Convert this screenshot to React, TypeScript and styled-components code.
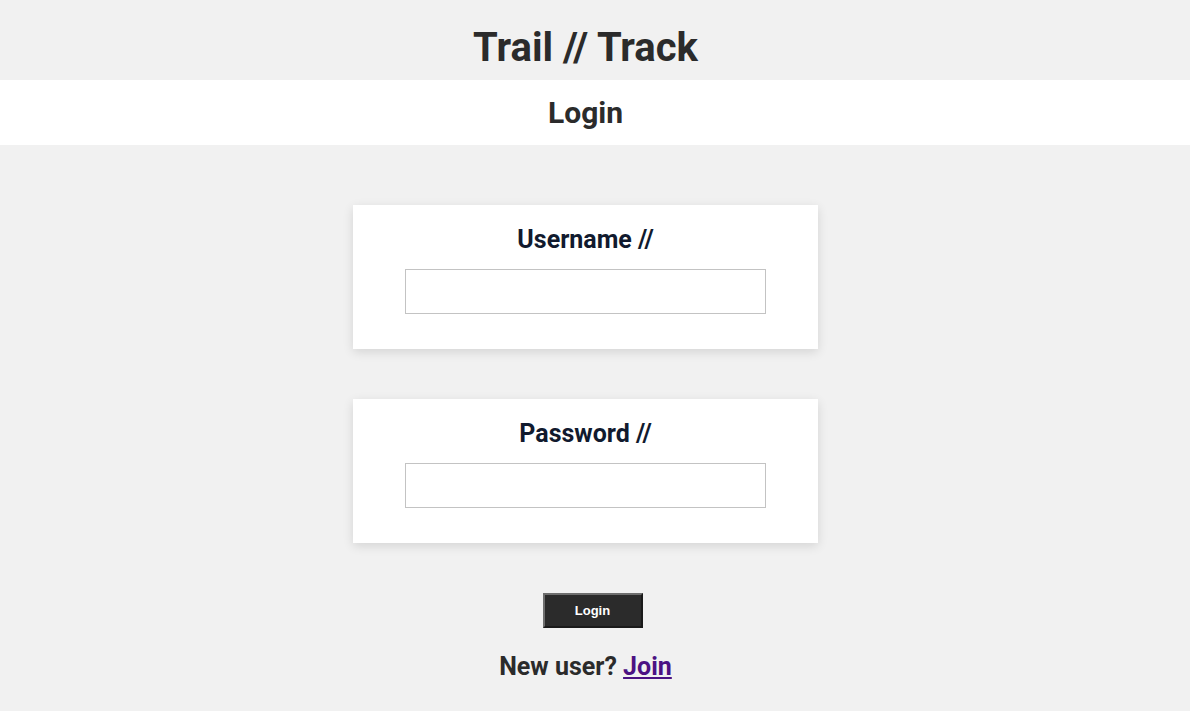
import styled, { createGlobalStyle } from "styled-components";

const GlobalStyle = createGlobalStyle`
  html, body {
    margin: 0;
    padding: 0;
    background: #f1f1f1;
    font-family: Roboto, "Liberation Sans", Arial, sans-serif;
    color: #2b2b2b;
  }
`;

// content sits centred in the area left of a 19px gutter; the white band still runs full width
const Page = styled.div`
  display: flex;
  flex-direction: column;
  align-items: center;
  min-height: 711px;
  padding-right: 19px;
`;

const Header = styled.header`
  width: 100%;
  height: 80px;
  display: flex;
  justify-content: center;
  align-items: center;
  padding-top: 16px;
  box-sizing: border-box;
`;

const SiteTitle = styled.h1`
  margin: 0;
  font-size: 40px;
  font-weight: 700;
  line-height: 48px;
`;

const Band = styled.div`
  width: calc(100% + 19px);
  margin-right: -19px;
  padding-right: 19px;
  box-sizing: border-box;
  height: 65px;
  background: #ffffff;
  display: flex;
  justify-content: center;
  align-items: center;
`;

const PageTitle = styled.h2`
  margin: 0;
  font-size: 30px;
  font-weight: 700;
  line-height: 36px;
`;

const Form = styled.form`
  display: flex;
  flex-direction: column;
  align-items: center;
  gap: 50px;
  padding-top: 60px;
`;

const FieldCard = styled.div`
  width: 465px;
  box-sizing: border-box;
  background: #ffffff;
  box-shadow: 0 3px 10px rgba(0, 0, 0, 0.12);
  display: flex;
  flex-direction: column;
  align-items: center;
  gap: 14px;
  padding: 20px 0 35px;
`;

const Label = styled.label`
  font-size: 25px;
  font-weight: 700;
  line-height: 30px;
  color: #111a2e;
`;

const TextInput = styled.input`
  width: 361px;
  height: 45px;
  box-sizing: border-box;
  border: 1px solid #c3c3c3;
  background: #ffffff;
  outline: none;
  padding: 0 8px;
  font-size: 16px;
`;

const SubmitButton = styled.button`
  width: 100px;
  height: 35px;
  margin-left: 14px;
  box-sizing: border-box;
  background: #2b2b2b;
  color: #ffffff;
  border: 2px solid #6e6e6e;
  border-right-color: #1a1a1a;
  border-bottom-color: #1a1a1a;
  font-family: "Liberation Sans", Arial, sans-serif;
  font-size: 13px;
  font-weight: 700;
  cursor: pointer;
`;

const Footer = styled.p`
  margin: 24px 0 0;
  font-size: 25px;
  font-weight: 700;
  line-height: 30px;
`;

const JoinLink = styled.a`
  color: #4b1283;
  text-decoration: underline;
`;

const fields = [
  { id: "username", label: "Username //", type: "text" },
  { id: "password", label: "Password //", type: "password" },
];

export default function App() {
  return (
    <Page>
      <GlobalStyle />
      <Header>
        <SiteTitle>Trail // Track</SiteTitle>
      </Header>
      <Band>
        <PageTitle>Login</PageTitle>
      </Band>
      <Form onSubmit={(e) => e.preventDefault()}>
        {fields.map((f) => (
          <FieldCard key={f.id}>
            <Label htmlFor={f.id}>{f.label}</Label>
            <TextInput id={f.id} type={f.type} />
          </FieldCard>
        ))}
        <SubmitButton type="submit">Login</SubmitButton>
      </Form>
      <Footer>
        New user? <JoinLink href="#">Join</JoinLink>
      </Footer>
    </Page>
  );
}
